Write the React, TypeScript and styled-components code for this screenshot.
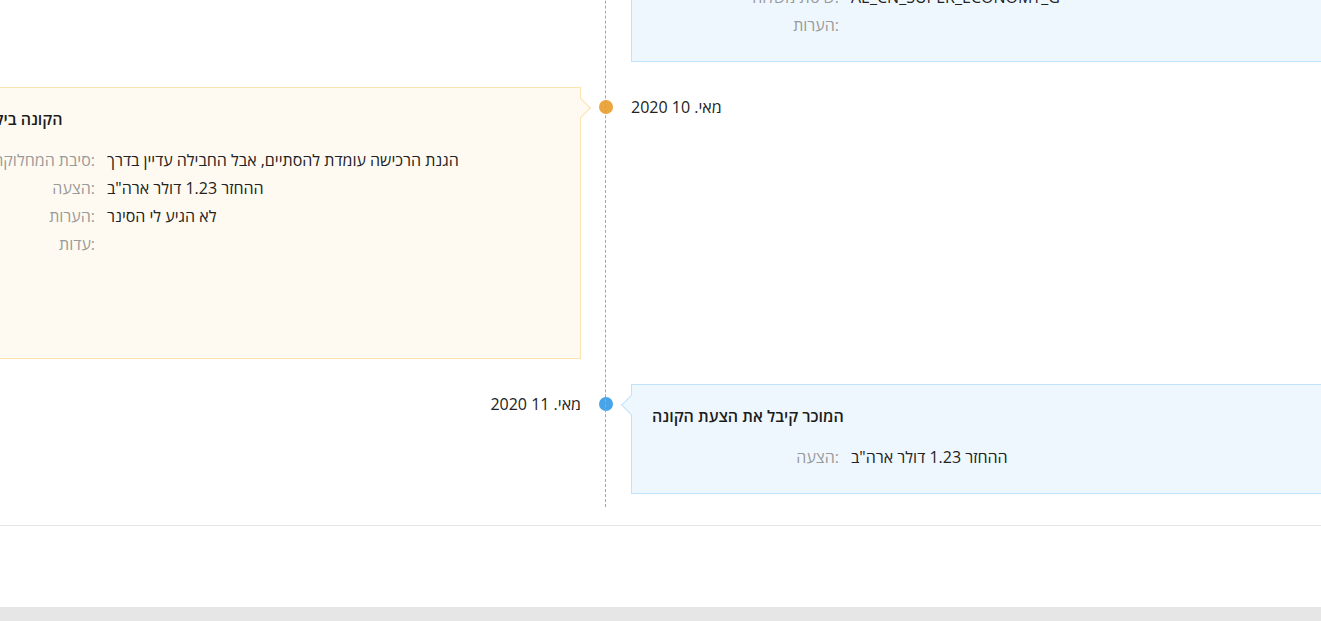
import React from 'react';
import styled, { createGlobalStyle, css } from 'styled-components';

type Tone = 'blue' | 'yellow';
type Side = 'left' | 'right';

interface Row {
  label: string;
  value?: string;
}

interface Event {
  side: Side;
  tone: Tone;
  date: string;
  title: string;
  rows: Row[];
  evidence?: boolean;
}

const events: Event[] = [
  {
    side: 'right',
    tone: 'blue',
    date: 'מאי. 8 2020',
    title: 'המוכר שלח את ההזמנה',
    rows: [
      { label: 'מספר מעקב:', value: 'LP00183756120352' },
      { label: 'שיטת משלוח:', value: 'AE_CN_SUPER_ECONOMY_G' },
      { label: 'הערות:' },
    ],
  },
  {
    side: 'left',
    tone: 'yellow',
    date: 'מאי. 10 2020',
    title: 'הקונה ביקש החזר כספי',
    rows: [
      { label: 'סיבת המחלוקת:', value: 'הגנת הרכישה עומדת להסתיים, אבל החבילה עדיין בדרך' },
      { label: 'הצעה:', value: 'ההחזר 1.23 דולר ארה"ב' },
      { label: 'הערות:', value: 'לא הגיע לי הסינר' },
    ],
    evidence: true,
  },
  {
    side: 'right',
    tone: 'blue',
    date: 'מאי. 11 2020',
    title: 'המוכר קיבל את הצעת הקונה',
    rows: [{ label: 'הצעה:', value: 'ההחזר 1.23 דולר ארה"ב' }],
  },
];

const tones = {
  blue: { bg: '#eff7fe', border: '#bfe4fa', dot: '#48a4e9' },
  yellow: { bg: '#fffaf1', border: '#fce2ae', dot: '#eca640' },
};

const App = () => {
  return (
    <>
      <GlobalStyle />
      <Viewport>
        <Timeline>
          {events.map((ev) => (
            <Item key={ev.date}>
              {ev.side === 'left' ? (
                <>
                  <Card $tone={ev.tone} $side="left">
                    <CardBody ev={ev} />
                  </Card>
                  <Dot $tone={ev.tone} />
                  <DateText $side="right">{ev.date}</DateText>
                </>
              ) : (
                <>
                  <DateText $side="left">{ev.date}</DateText>
                  <Dot $tone={ev.tone} />
                  <Card $tone={ev.tone} $side="right">
                    <CardBody ev={ev} />
                  </Card>
                </>
              )}
            </Item>
          ))}
        </Timeline>
        <Divider />
        <Footer />
      </Viewport>
    </>
  );
};

const CardBody = ({ ev }: { ev: Event }) => (
  <>
    <Title>{ev.title}</Title>
    <Details>
      {ev.rows.map((row) => (
        <React.Fragment key={row.label}>
          <Label>{row.label}</Label>
          <Value>{row.value}</Value>
        </React.Fragment>
      ))}
      {ev.evidence && (
        <>
          <Label>עדות:</Label>
          <Evidence />
        </>
      )}
    </Details>
  </>
);

const GlobalStyle = createGlobalStyle`
  html, body {
    margin: 0;
    padding: 0;
    background: #fff;
  }
  body {
    font-family: "Open Sans", "Liberation Sans", sans-serif;
    color: #222;
  }
`;

const Viewport = styled.div`
  width: 100%;
  min-height: 621px;
  overflow: hidden;
`;

const Timeline = styled.div`
  position: relative;
  width: 1438px;
  margin: -104px 0 0 -113px;
  padding-bottom: 13px;
  display: flex;
  flex-direction: column;
  gap: 25px;

  &::before {
    content: '';
    position: absolute;
    top: 0;
    bottom: 0;
    left: 718px;
    border-left: 1px dashed #a5a5a5;
  }
`;

const Item = styled.div`
  display: grid;
  grid-template-columns: 694px 50px 694px;
  align-items: start;
`;

const Card = styled.div<{ $tone: Tone; $side: Side }>`
  position: relative;
  background: ${({ $tone }) => tones[$tone].bg};
  border: 1px solid ${({ $tone }) => tones[$tone].border};
  padding: 20px 20px 22px;

  &::before {
    content: '';
    position: absolute;
    top: 13px;
    width: 13px;
    height: 13px;
    background: ${({ $tone }) => tones[$tone].bg};
    transform: rotate(45deg);
    ${({ $side, $tone }) =>
      $side === 'left'
        ? css`
            right: -8px;
            border-top: 1px solid ${tones[$tone].border};
            border-right: 1px solid ${tones[$tone].border};
          `
        : css`
            left: -8px;
            border-bottom: 1px solid ${tones[$tone].border};
            border-left: 1px solid ${tones[$tone].border};
          `}
  }
`;

const Title = styled.div`
  direction: rtl;
  text-align: left;
  font-size: 16px;
  font-weight: 600;
  line-height: 22px;
  color: #1c1c1c;
  margin-bottom: 16px;
`;

const Details = styled.div`
  display: grid;
  grid-template-columns: 187px 1fr;
  column-gap: 12px;
  font-size: 16px;
  line-height: 22px;
`;

const Label = styled.div`
  direction: ltr;
  text-align: right;
  color: #9a9a9a;
  padding: 3px 0;
  white-space: nowrap;
`;

const Value = styled.div`
  direction: rtl;
  text-align: left;
  color: #222;
  padding: 3px 0;
  min-height: 22px;
`;

const Evidence = styled.div`
  min-height: 100px;
  padding: 3px 0;
`;

const Dot = styled.span<{ $tone: Tone }>`
  justify-self: center;
  width: 14px;
  height: 14px;
  margin-top: 13px;
  border-radius: 50%;
  background: ${({ $tone }) => tones[$tone].dot};
`;

const DateText = styled.div<{ $side: Side }>`
  direction: rtl;
  justify-self: ${({ $side }) => ($side === 'left' ? 'end' : 'start')};
  margin-top: 9px;
  font-size: 16px;
  line-height: 22px;
  color: #222;
  white-space: nowrap;
`;

const Divider = styled.div`
  margin-top: 18px;
  height: 81px;
  border-top: 1px solid #e6e6e6;
`;

const Footer = styled.footer`
  height: 60px;
  background: #e6e6e6;
`;

export default App;
